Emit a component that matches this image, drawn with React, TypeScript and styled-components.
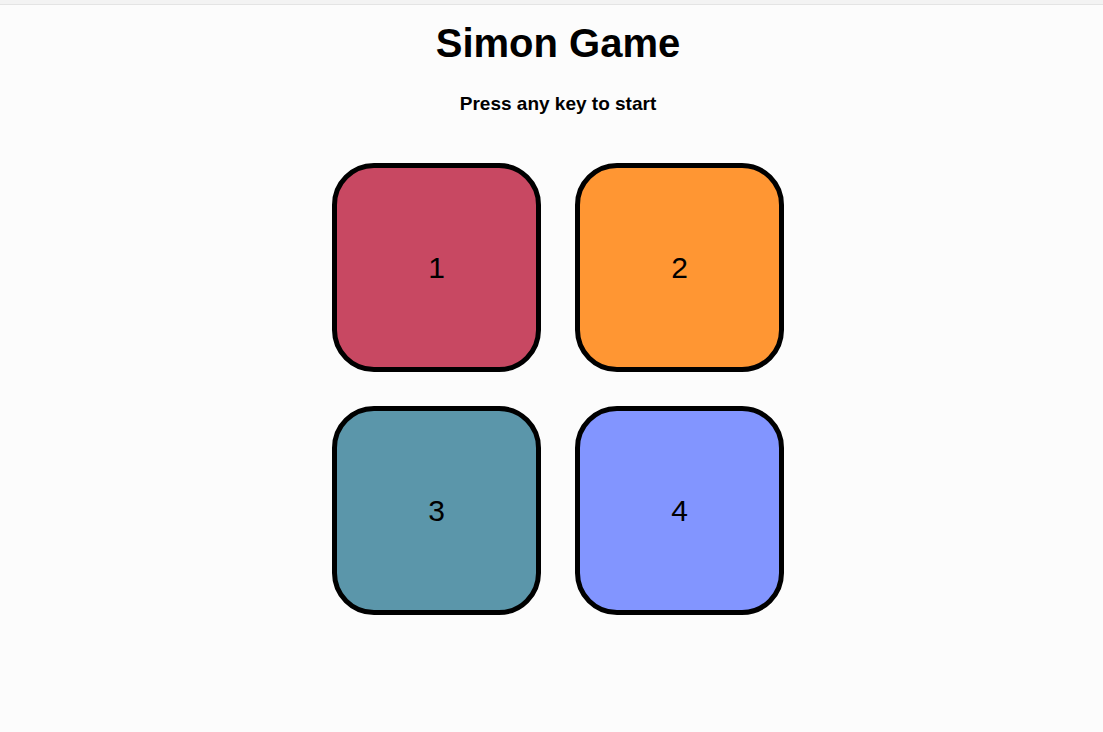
import React from "react";
import styled, { createGlobalStyle } from "styled-components";

const Global = createGlobalStyle`
  html, body { margin: 0; padding: 0; background: #fcfcfc; }
  body { font-family: "Liberation Sans", Arial, sans-serif; color: #000; }
`;

const TopBar = styled.div`
  height: 4px;
  background: #f3f3f3;
  border-bottom: 1px solid #e4e4e4;
`;

const Page = styled.main`
  display: flex;
  flex-direction: column;
  align-items: center;
  padding-left: 13px;
`;

const Title = styled.h1`
  margin: 15px 0 0;
  font-size: 40px;
  font-weight: 700;
  line-height: 46px;
`;

const Subtitle = styled.h3`
  margin: 27px 0 0;
  font-size: 19px;
  font-weight: 700;
  line-height: 22px;
`;

const Board = styled.div`
  margin-top: 48px;
  display: grid;
  grid-template-columns: repeat(2, 209px);
  gap: 34px;
`;

const Pad = styled.button<{ $color: string }>`
  box-sizing: border-box;
  width: 209px;
  height: 209px;
  border: 5px solid #000;
  border-radius: 42px;
  background: ${(p) => p.$color};
  font-family: "Liberation Sans", Arial, sans-serif;
  font-size: 30px;
  color: #000;
  display: flex;
  align-items: center;
  justify-content: center;
  padding: 0;
  cursor: pointer;
`;

const pads = [
  { n: 1, c: "#c84862" },
  { n: 2, c: "#ff9633" },
  { n: 3, c: "#5b96aa" },
  { n: 4, c: "#8295ff" },
];

export default function App() {
  return (
    <>
      <Global />
      <TopBar />
      <Page>
        <Title>Simon Game</Title>
        <Subtitle>Press any key to start</Subtitle>
        <Board>
          {pads.map((p) => (
            <Pad key={p.n} $color={p.c}>
              {p.n}
            </Pad>
          ))}
        </Board>
      </Page>
    </>
  );
}
